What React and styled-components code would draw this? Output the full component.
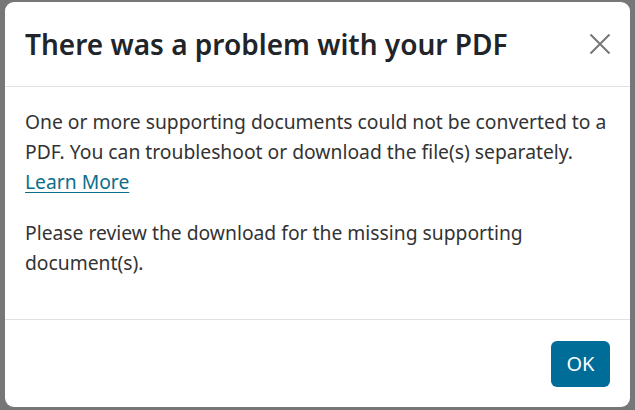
import styled, { createGlobalStyle } from 'styled-components';

const GlobalStyle = createGlobalStyle`
  html, body {
    margin: 0;
    padding: 0;
    background: #777777;
    font-family: 'Noto Sans', 'Open Sans', sans-serif;
  }
`;

const Backdrop = styled.div`
  width: 635px;
  height: 410px;
  padding: 2px 5px 3px 5px;
  box-sizing: border-box;
  background: #777777;
`;

const Dialog = styled.div`
  height: 100%;
  display: flex;
  flex-direction: column;
  background: #ffffff;
  border-radius: 9px;
  overflow: hidden;
`;

const Header = styled.div`
  display: flex;
  align-items: center;
  justify-content: space-between;
  height: 85px;
  padding: 0 14px 0 20px;
  border-bottom: 1px solid #dee2e6;
  box-sizing: border-box;
`;

const Title = styled.h1`
  margin: 0;
  font-size: 28px;
  font-weight: 600;
  color: #212529;
`;

const CloseButton = styled.button`
  display: flex;
  align-items: center;
  justify-content: center;
  width: 32px;
  height: 32px;
  padding: 0;
  border: none;
  background: transparent;
  cursor: pointer;
`;

const Body = styled.div`
  flex: 1;
  padding: 20px 14px 0 20px;
`;

const Paragraph = styled.p`
  margin: 0 0 21px 0;
  font-size: 19.3px;
  line-height: 30px;
  color: #333333;
`;

const Link = styled.a`
  color: #0b6e8a;
  text-decoration: underline;
  text-underline-offset: 3px;
`;

const Footer = styled.div`
  display: flex;
  justify-content: flex-end;
  align-items: center;
  height: 88px;
  padding: 0 20px;
  border-top: 1px solid #dee2e6;
  box-sizing: border-box;
`;

const OkButton = styled.button`
  width: 59px;
  height: 46px;
  border: none;
  border-radius: 6px;
  background: #006d98;
  color: #ffffff;
  font-family: inherit;
  font-size: 20px;
  cursor: pointer;
`;

export default function App() {
  return (
    <>
      <GlobalStyle />
      <Backdrop>
        <Dialog role='dialog' aria-labelledby='pdf-problem-title'>
          <Header>
            <Title id='pdf-problem-title'>There was a problem with your PDF</Title>
            <CloseButton aria-label='Close'>
              <svg width='22' height='22' viewBox='0 0 22 22'>
                <path d='M1.5 1.5 L20.5 20.5 M20.5 1.5 L1.5 20.5' stroke='#777' strokeWidth='2' fill='none' />
              </svg>
            </CloseButton>
          </Header>
          <Body>
            <Paragraph>
              One or more supporting documents could not be converted to a PDF. You can
              troubleshoot or download the file(s) separately.{' '}
              <Link href='#'>Learn More</Link>
            </Paragraph>
            <Paragraph>
              Please review the download for the missing supporting document(s).
            </Paragraph>
          </Body>
          <Footer>
            <OkButton>OK</OkButton>
          </Footer>
        </Dialog>
      </Backdrop>
    </>
  );
}
